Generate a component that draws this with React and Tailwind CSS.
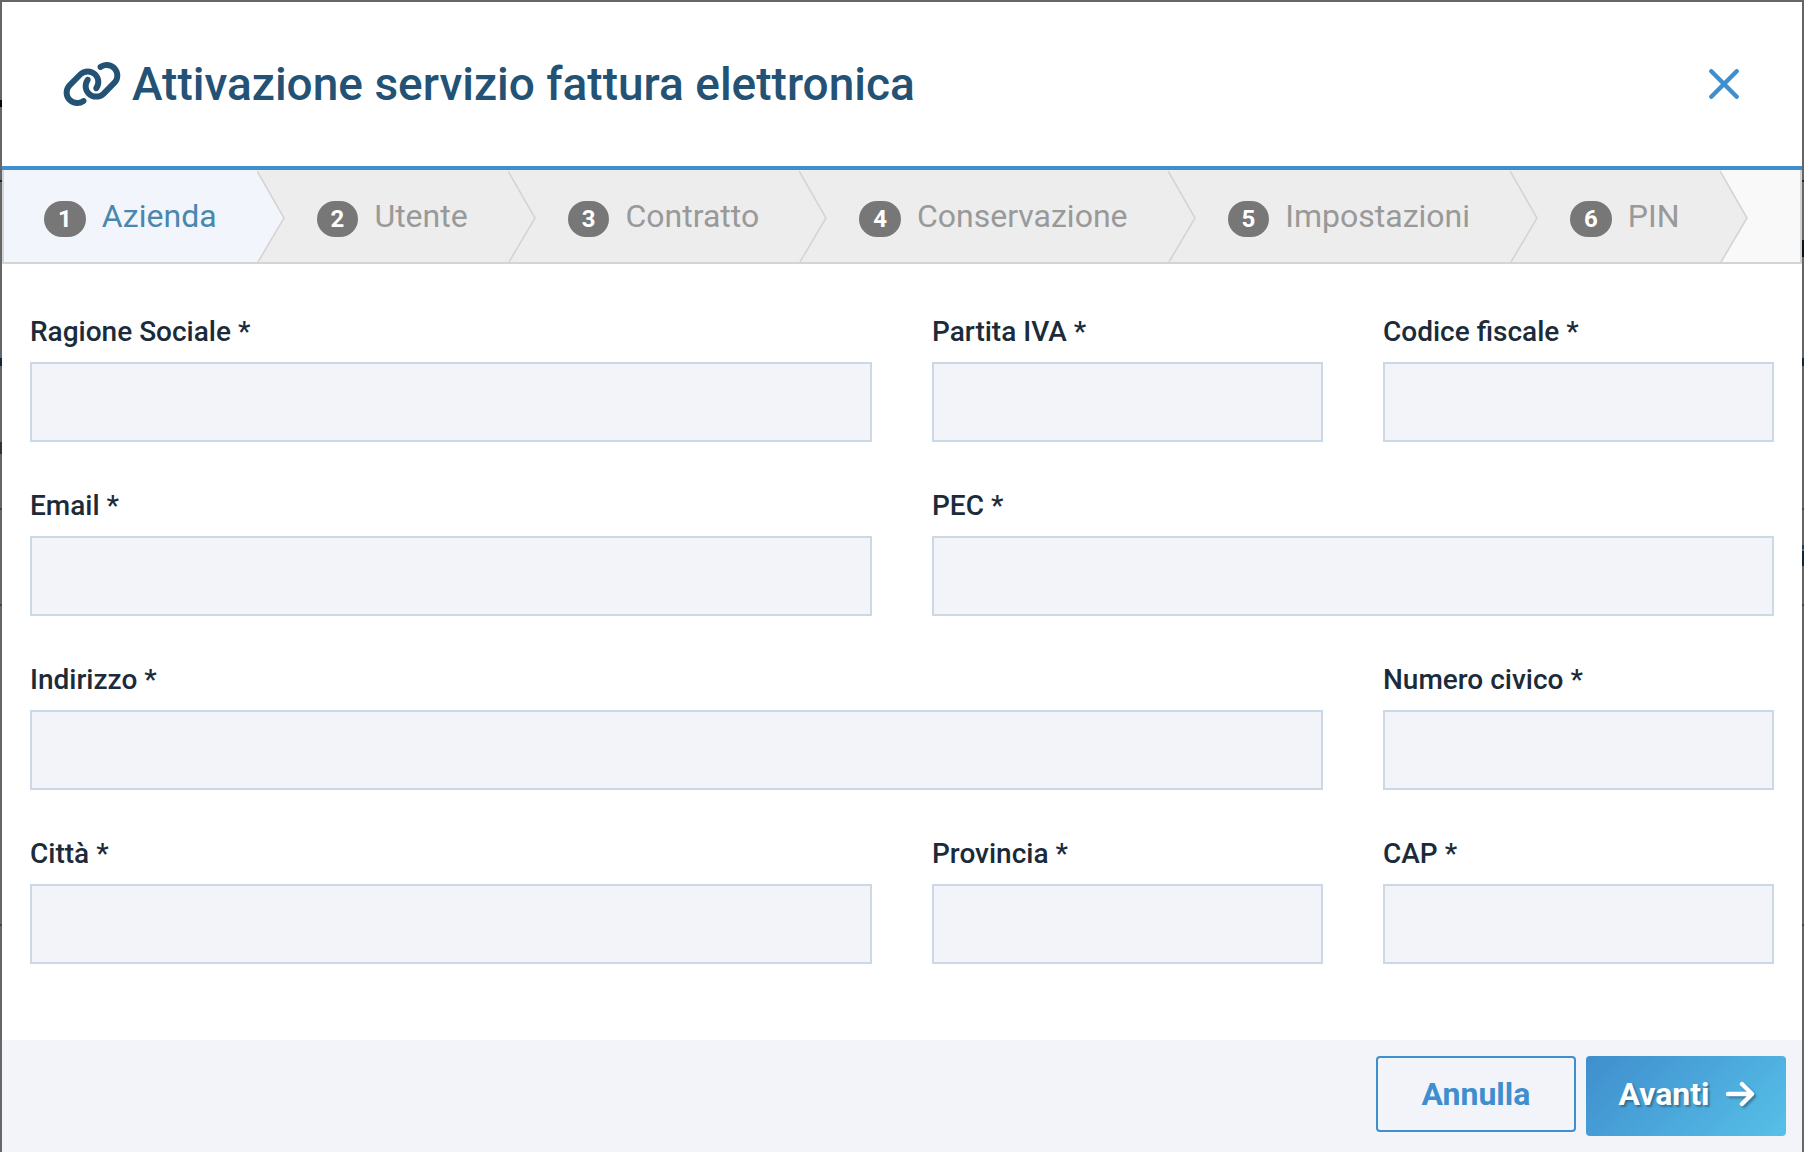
import React, { useState } from 'react';
import { FaLink } from 'react-icons/fa6';

const steps = ['Azienda', 'Utente', 'Contratto', 'Conservazione', 'Impostazioni', 'PIN'];

const fields = [
  { id: 'ragioneSociale', label: 'Ragione Sociale', span: 'col-span-2' },
  { id: 'partitaIva', label: 'Partita IVA', span: 'col-span-1' },
  { id: 'codiceFiscale', label: 'Codice fiscale', span: 'col-span-1' },
  { id: 'email', label: 'Email', span: 'col-span-2', type: 'email' },
  { id: 'pec', label: 'PEC', span: 'col-span-2', type: 'email' },
  { id: 'indirizzo', label: 'Indirizzo', span: 'col-span-3' },
  { id: 'numeroCivico', label: 'Numero civico', span: 'col-span-1' },
  { id: 'citta', label: 'Città', span: 'col-span-2' },
  { id: 'provincia', label: 'Provincia', span: 'col-span-1' },
  { id: 'cap', label: 'CAP', span: 'col-span-1' },
];

// bands of the dimmed page that show at the dialog's edges
const leftBands = [
  { top: 100, height: 7, color: '#05070a' },
  { top: 180, height: 2, color: '#10273a' },
  { top: 358, height: 8, color: '#10273a' },
  { top: 442, height: 12, color: '#333333' },
  { top: 508, height: 2, color: '#444444' },
  { top: 604, height: 2, color: '#444444' },
  { top: 924, height: 2, color: '#444444' },
];

const rightBands = [
  { top: 180, height: 2, color: '#10273a' },
  { top: 240, height: 17, color: '#0b1119' },
  { top: 358, height: 8, color: '#10273a' },
  { top: 508, height: 2, color: '#444444' },
  { top: 545, height: 4, color: '#2a3c4a' },
  { top: 551, height: 15, color: '#10273a' },
  { top: 604, height: 2, color: '#444444' },
  { top: 924, height: 2, color: '#444444' },
];

const Backdrop = () => (
  <div className="absolute inset-0 bg-[#666666]" aria-hidden="true">
    {leftBands.map((band) => (
      <div
        key={band.top}
        className="absolute left-0 w-1/2"
        style={{ top: band.top, height: band.height, background: band.color }}
      />
    ))}
    {rightBands.map((band) => (
      <div
        key={band.top}
        className="absolute right-0 w-1/2"
        style={{ top: band.top, height: band.height, background: band.color }}
      />
    ))}
  </div>
);

const CloseIcon = () => (
  <svg viewBox="0 0 30 30" className="size-[30px]" fill="none" stroke="currentColor" strokeWidth="4.4" strokeLinecap="round">
    <path d="M2.3 2.3 27.7 27.7M27.7 2.3 2.3 27.7" />
  </svg>
);

const ArrowIcon = () => (
  <svg
    viewBox="0 0 28 26"
    className="h-[26px] w-7 overflow-visible drop-shadow-[2px_2px_1px_rgba(0,0,0,0.3)]"
    fill="none"
    stroke="currentColor"
    strokeWidth="4.4"
    strokeLinecap="round"
    strokeLinejoin="round"
  >
    <path d="M2 13H25M16 3 26 13 16 23" />
  </svg>
);

const Step = ({ number, label, active, onSelect }) => (
  <li className={`relative flex items-center ${active ? 'bg-[#f2f6fc]' : 'bg-[#ededed]'}`}>
    <button
      type="button"
      onClick={onSelect}
      aria-current={active ? 'step' : undefined}
      className={`flex items-baseline gap-4 pr-10 ${number === 1 ? 'pl-10' : 'pl-[60px]'}`}
    >
      <span className="rounded-[20px] bg-[#777777] px-3.5 text-center text-2xl leading-9 font-bold text-white">
        {number}
      </span>
      <span className={`text-[32px] leading-10 ${active ? 'text-[#4a87ae]' : 'text-[#999999]'}`}>
        {label}
      </span>
    </button>
    <svg
      viewBox="0 0 28 92"
      preserveAspectRatio="none"
      className={`absolute top-0 left-full z-10 h-full w-7 ${active ? 'text-[#f2f6fc]' : 'text-[#ededed]'}`}
    >
      <path d="M0 0 27 48 1 92H0Z" fill="currentColor" />
      <path d="M0 1 27 48 1 92" fill="none" stroke="#d4d4d4" strokeWidth="1.6" />
    </svg>
  </li>
);

const Field = ({ id, label, span, type = 'text', value, onChange }) => (
  <div className={`flex flex-col gap-2.5 ${span}`}>
    <label htmlFor={id} className="text-[28px] leading-10 font-medium text-[#1c2b39]">
      {label} *
    </label>
    <input
      id={id}
      name={id}
      type={type}
      value={value}
      onChange={onChange}
      required
      className="h-20 w-full border-2 border-[#cbd8e6] bg-[#f3f4f9] px-5 text-[28px] text-[#1c2b39] outline-none focus:border-[#3f8ecd]"
    />
  </div>
);

const App = () => {
  const [current, setCurrent] = useState(1);
  const [values, setValues] = useState({});

  const handleChange = (ev) => {
    setValues({ ...values, [ev.target.name]: ev.target.value });
  };

  const handleSubmit = (ev) => {
    ev.preventDefault();
    setCurrent(Math.min(current + 1, steps.length));
  };

  return (
    <div className="relative min-h-screen px-0.5 pt-0.5 font-['Roboto',sans-serif]">
      <Backdrop />
      <form onSubmit={handleSubmit} role="dialog" aria-labelledby="dialog-title" className="relative bg-white">
        <header className="flex items-center justify-between border-b-4 border-[#3f8ecd] pt-[50px] pr-[63px] pb-[50px] pl-[60px]">
          <h1 id="dialog-title" className="flex items-center gap-2.5 text-[46px] leading-16 font-medium text-[#235275]">
            <FaLink className="h-12 w-[60px]" />
            Attivazione servizio fattura elettronica
          </h1>
          <button type="button" aria-label="Chiudi" className="text-[#3f8ecd]">
            <CloseIcon />
          </button>
        </header>

        <ol className="flex h-[94px] border-x-2 border-b-2 border-[#d4d4d4] bg-[#f9f9f9]">
          {steps.map((label, i) => (
            <Step
              key={label}
              number={i + 1}
              label={label}
              active={current === i + 1}
              onSelect={() => setCurrent(i + 1)}
            />
          ))}
        </ol>

        <div className="grid grid-cols-4 gap-x-[60px] gap-y-11 px-7 pt-12 pb-[76px]">
          {fields.map((field) => (
            <Field key={field.id} {...field} value={values[field.id] || ''} onChange={handleChange} />
          ))}
        </div>

        <footer className="flex items-start justify-end gap-2.5 bg-[#f3f4f9] p-4">
          <button
            type="button"
            className="h-[76px] w-[200px] rounded border-2 border-[#3f8ecd] text-[32px] font-bold text-[#3f8ecd]"
          >
            Annulla
          </button>
          <button
            type="submit"
            className="flex h-20 w-[200px] items-center justify-center gap-4 rounded bg-linear-135 from-[#3f8ecd] to-[#57c0e8] pb-1 text-[32px] font-bold text-white [text-shadow:2px_2px_2px_rgba(0,0,0,0.3)]"
          >
            Avanti
            <ArrowIcon />
          </button>
        </footer>
      </form>
    </div>
  );
};

export default App;
